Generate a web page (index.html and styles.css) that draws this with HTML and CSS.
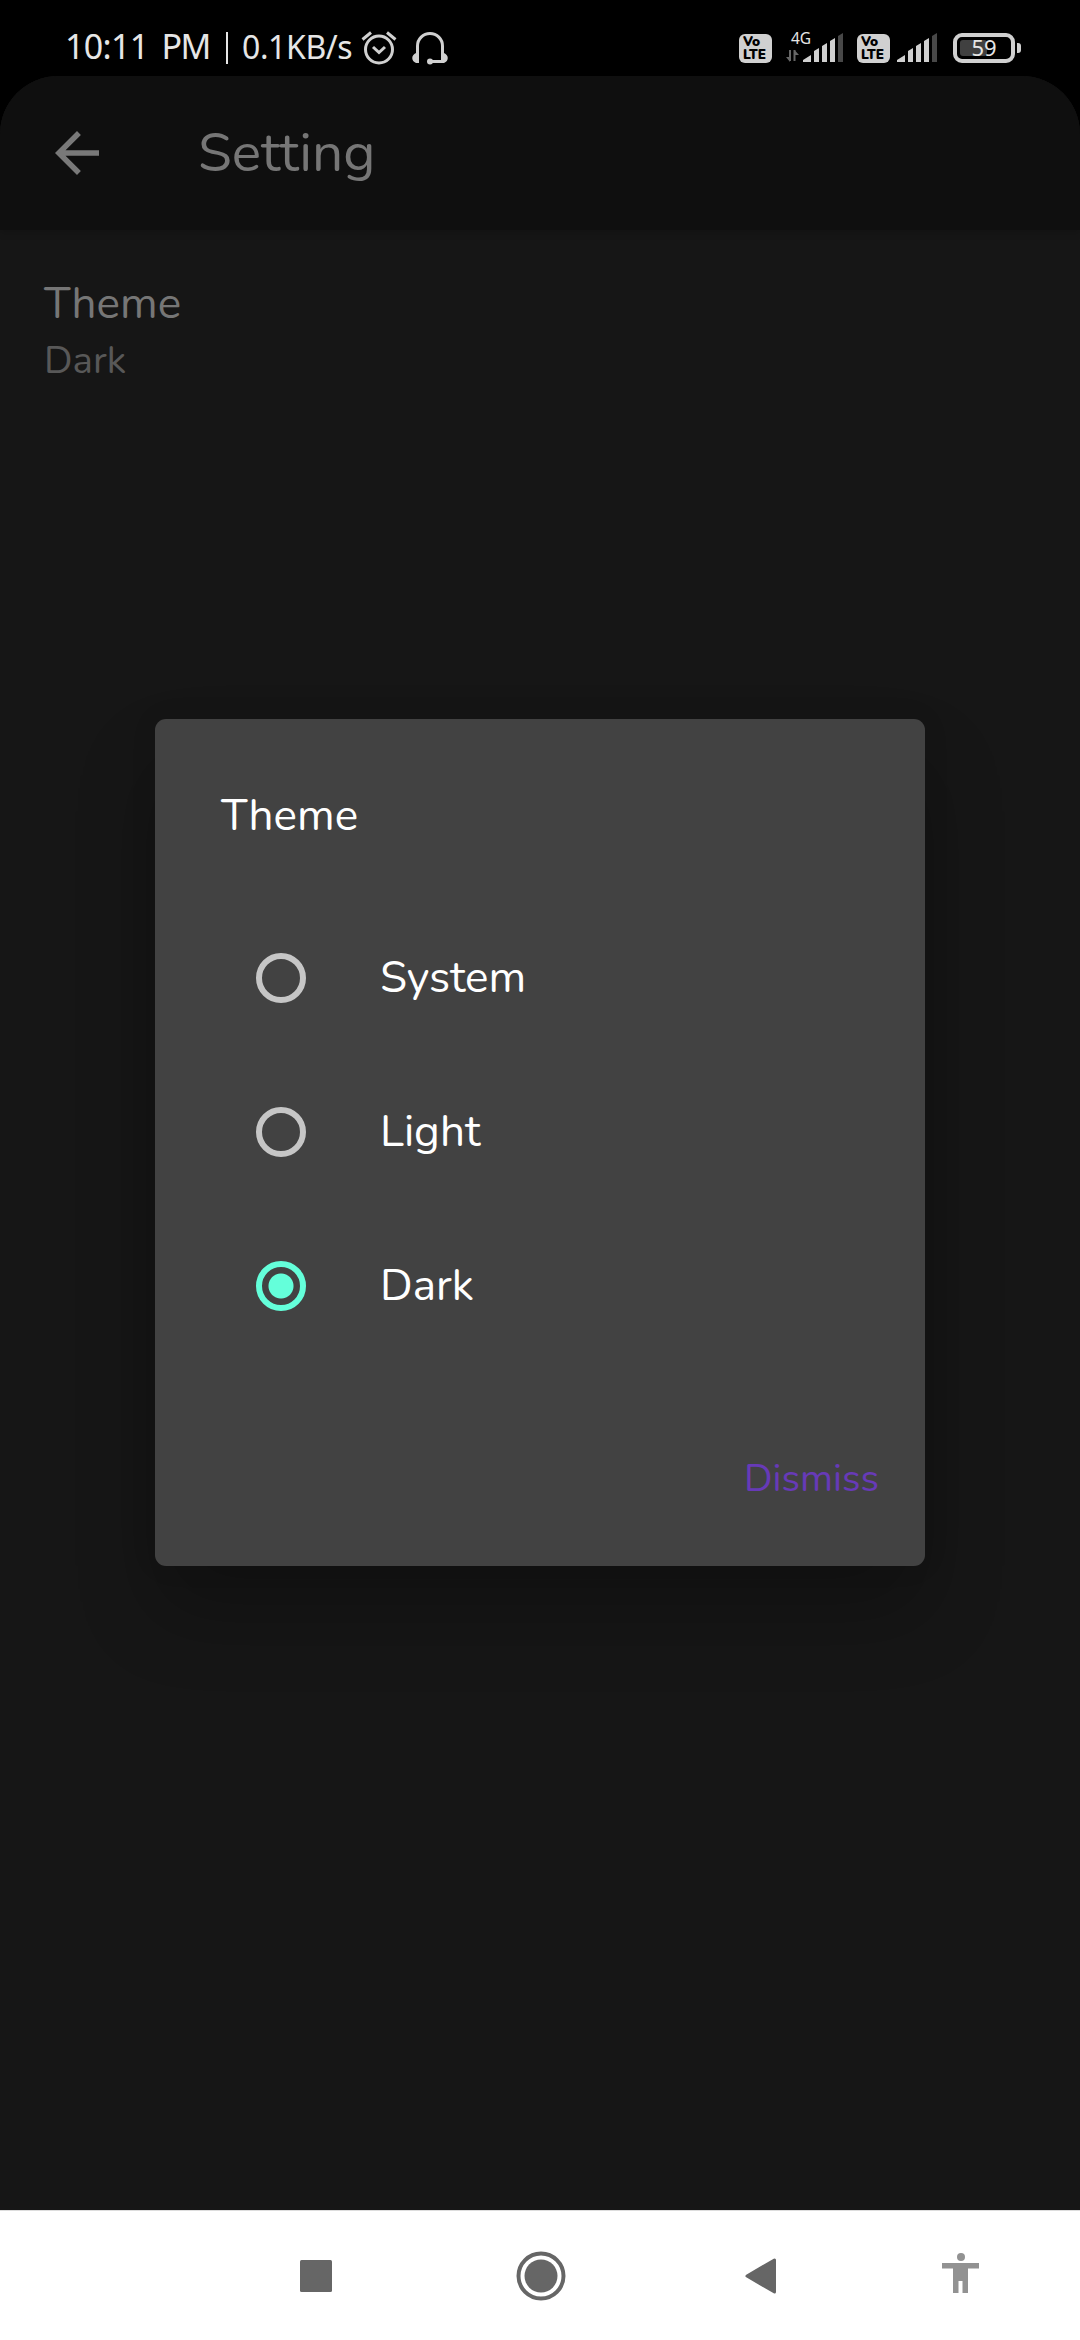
FILE: index.html
```html
<!DOCTYPE html>
<html lang="en">
<head>
<meta charset="utf-8">
<title>Setting</title>
<link rel="stylesheet" href="styles.css">
</head>
<body>
<div class="phone">
  <header class="status">
    <div class="status-left">
      <span class="clock">10:11 <span class="meridiem">PM</span></span>
      <span class="divider"></span>
      <span class="speed">0.1KB/s</span>
      <svg class="alarm" width="36" height="36" viewBox="0 0 36 36" fill="none" stroke="#d0d0d0" stroke-width="3">
        <circle cx="18" cy="19.500" r="13.500"/>
        <path d="M1.500 9.500 10 2.500M34.500 9.500 26 2.500"/>
        <path d="M12 17 18 22.500 24 17"/>
      </svg>
      <svg class="headset" width="36" height="36" viewBox="0 0 36 36">
        <path d="M5.500 32V15a12.500 12.500 0 0 1 25 0V32M18 30.500H31" fill="none" stroke="#d0d0d0" stroke-width="3"/>
        <path d="M7 22v10H4C-1 30-1 24 4 22zM29 22v10h3c5-2 5-8 0-10z" fill="#d0d0d0"/>
        <circle cx="18" cy="30.500" r="3" fill="#d0d0d0"/>
      </svg>
    </div>
    <div class="status-right">
      <div class="volte"><span>Vo</span><span>LTE</span></div>
      <div class="network">
        <span class="gen">4G</span>
        <svg width="57" height="30" viewBox="0 0 57 30">
          <path d="M4 17v11M8.500 28V17" stroke="#666" stroke-width="2" fill="none"/>
          <path d="M0 24h4v5zM8.500 17l4.500 5H8.500z" fill="#666"/>
          <path d="M17 29v-2l8-5v7zM28 29V18l5-3v14zM36 29V13l5-3v19zM44 29V8l5-3v24z" fill="#d0d0d0"/>
          <path d="M52 29V3l5-3v29z" fill="#484848"/>
        </svg>
      </div>
      <div class="volte second"><span>Vo</span><span>LTE</span></div>
      <svg class="bars" width="40" height="30" viewBox="17 0 40 30">
        <path d="M17 29v-2l8-5v7zM28 29V18l5-3v14zM36 29V13l5-3v19zM44 29V8l5-3v24z" fill="#d0d0d0"/>
        <path d="M52 29V3l5-3v29z" fill="#484848"/>
      </svg>
      <div class="battery"><div class="charge"></div><span>59</span></div>
      <div class="battery-tip"></div>
    </div>
  </header>

  <main class="app">
    <div class="appbar">
      <svg width="44" height="44" viewBox="0 0 44 44"><path d="M44 19.250H10.530L25.900 3.880 22 0 0 22 22 44 25.880 40.120 10.530 24.750H44z" fill="#797979"/></svg>
      <h1>Setting</h1>
    </div>
    <div class="preference">
      <div class="pref-title">Theme</div>
      <div class="pref-value">Dark</div>
    </div>
    <section class="dialog">
      <h2>Theme</h2>
      <div class="options">
        <div class="option"><span class="radio"></span><span class="label">System</span></div>
        <div class="option"><span class="radio"></span><span class="label">Light</span></div>
        <div class="option"><span class="radio checked"></span><span class="label">Dark</span></div>
      </div>
      <div class="actions"><span class="dismiss">Dismiss</span></div>
    </section>
  </main>

  <nav class="navbar">
    <svg class="recent" width="32" height="32"><rect width="32" height="32" rx="1.500" fill="#666"/></svg>
    <svg class="home" width="50" height="50" viewBox="0 0 50 50"><circle cx="25" cy="25" r="22.500" fill="none" stroke="#666" stroke-width="4"/><circle cx="25" cy="25" r="16.500" fill="#666"/></svg>
    <svg class="back" width="32" height="36" viewBox="0 0 32 36"><path d="M2 18 29.500 2v32z" fill="#666" stroke="#666" stroke-width="3" stroke-linejoin="round"/></svg>
    <svg class="access" width="37" height="40" viewBox="0 0 37 40"><circle cx="19" cy="4" r="4" fill="#929292"/><path d="M0 10h37v5.500H26V40h-5.500V28h-4V40H11V15.500H0z" fill="#929292"/></svg>
  </nav>
</div>
</body>
</html>
```

FILE: styles.css
```css
* { box-sizing: border-box; }
body { margin: 0; background: #000; }
svg { display: block; flex: none; }
h1, h2 { margin: 0; font-weight: 400; }

.phone {
  width: 1080px;
  height: 2340px;
  display: flex;
  flex-direction: column;
  overflow: hidden;
  font-family: Nunito, Lato, sans-serif;
  white-space: nowrap;
}

/* status bar */
.status {
  height: 76px;
  flex: none;
  display: flex;
  justify-content: space-between;
  padding: 0 59px 0 65px;
  color: #e6e6e6;
  font-family: "Noto Sans", sans-serif;
}
.status-left, .status-right { display: flex; align-items: flex-start; }
.clock { width: 161px; font-size: 34px; line-height: 40px; margin-top: 26px; letter-spacing: -.7px; word-spacing: 5px; }
.meridiem { letter-spacing: -1.5px; }
.divider { width: 2px; height: 32px; margin-top: 32px; background: #e6e6e6; }
.speed { width: 118px; margin: 27px 0 0 14px; font-size: 32px; line-height: 40px; letter-spacing: -.4px; }
.alarm { margin: 30px 0 0 1px; }
.headset { margin: 31px 0 0 15px; }

.volte {
  width: 33px;
  height: 29px;
  margin-top: 34px;
  padding: 2px 0 0 4px;
  border-radius: 6px;
  background: #d0d0d0;
  color: #000;
  font: 900 13.5px/12.5px Nunito, "Noto Sans", sans-serif;
  display: flex;
  flex-direction: column;
}
.network { margin: 33px 0 0 14px; position: relative; }
.gen { position: absolute; left: 5px; top: -5px; font-size: 15.5px; line-height: 20px; }
.second { margin-left: 14px; }
.bars { margin: 33px 0 0 7px; }
.battery {
  position: relative;
  width: 62px;
  height: 30px;
  margin: 33px 0 0 16px;
  border: 4px solid #d0d0d0;
  border-radius: 9px;
  text-align: center;
  font-size: 22px;
  line-height: 20px;
}
.battery span { position: relative; }
.charge { position: absolute; left: 3px; top: 3px; width: 27px; height: 16px; border-radius: 3px; background: #404040; }
.battery-tip { width: 4px; height: 10px; margin: 43px 0 0 2px; border-radius: 0 3px 3px 0; background: #d0d0d0; }

/* settings screen */
.app {
  position: relative;
  height: 2134px;
  flex: none;
  background: #161616;
  border-radius: 58px 58px 0 0;
  overflow: hidden;
}
.appbar {
  height: 154px;
  display: flex;
  align-items: center;
  padding: 0 0 0 55px;
  background: #0f0f0f;
  box-shadow: 0 2px 8px rgba(0, 0, 0, .2);
}
.appbar h1 { margin: 0 0 0 99px; font-size: 55px; line-height: 66px; color: #767676; }
.preference { padding: 44px; }
.pref-title { font-size: 44px; line-height: 60px; color: #767676; }
.pref-value { font-size: 38.5px; line-height: 53px; color: #585858; }

/* theme dialog */
.dialog {
  position: absolute;
  left: 155px;
  top: 643px;
  width: 770px;
  height: 847px;
  padding: 69px 0 0;
  border-radius: 11px;
  background: #424242;
  color: #fff;
  box-shadow: 0 46px 80px rgba(0, 0, 0, .24), 0 0 30px rgba(0, 0, 0, .06);
}
.dialog h2 { margin-left: 66px; font-size: 44px; line-height: 56px; }
.options { margin-top: 57px; }
.option { height: 154px; display: flex; align-items: center; padding-left: 101px; }
.radio { width: 50px; height: 50px; border: 6px solid #c6c6c6; border-radius: 50%; }
.radio.checked { border-color: #64ffda; background: radial-gradient(circle, #64ffda 12px, transparent 13px); }
.label { margin: -1px 0 0 74px; font-size: 44px; line-height: 56px; }
.actions { display: flex; justify-content: flex-end; padding: 91px 46px 0 0; }
.dismiss { font-size: 38.5px; line-height: 50px; color: #673ab7; }

/* navigation bar */
.navbar {
  height: 130px;
  flex: none;
  display: flex;
  align-items: center;
  border-top: 1px solid #ddd;
  background: #fff;
}
.recent { margin-left: 300px; }
.home { margin-left: 184px; }
.back { margin-left: 179px; }
.access { margin: -5px 0 0 165px; }
```
